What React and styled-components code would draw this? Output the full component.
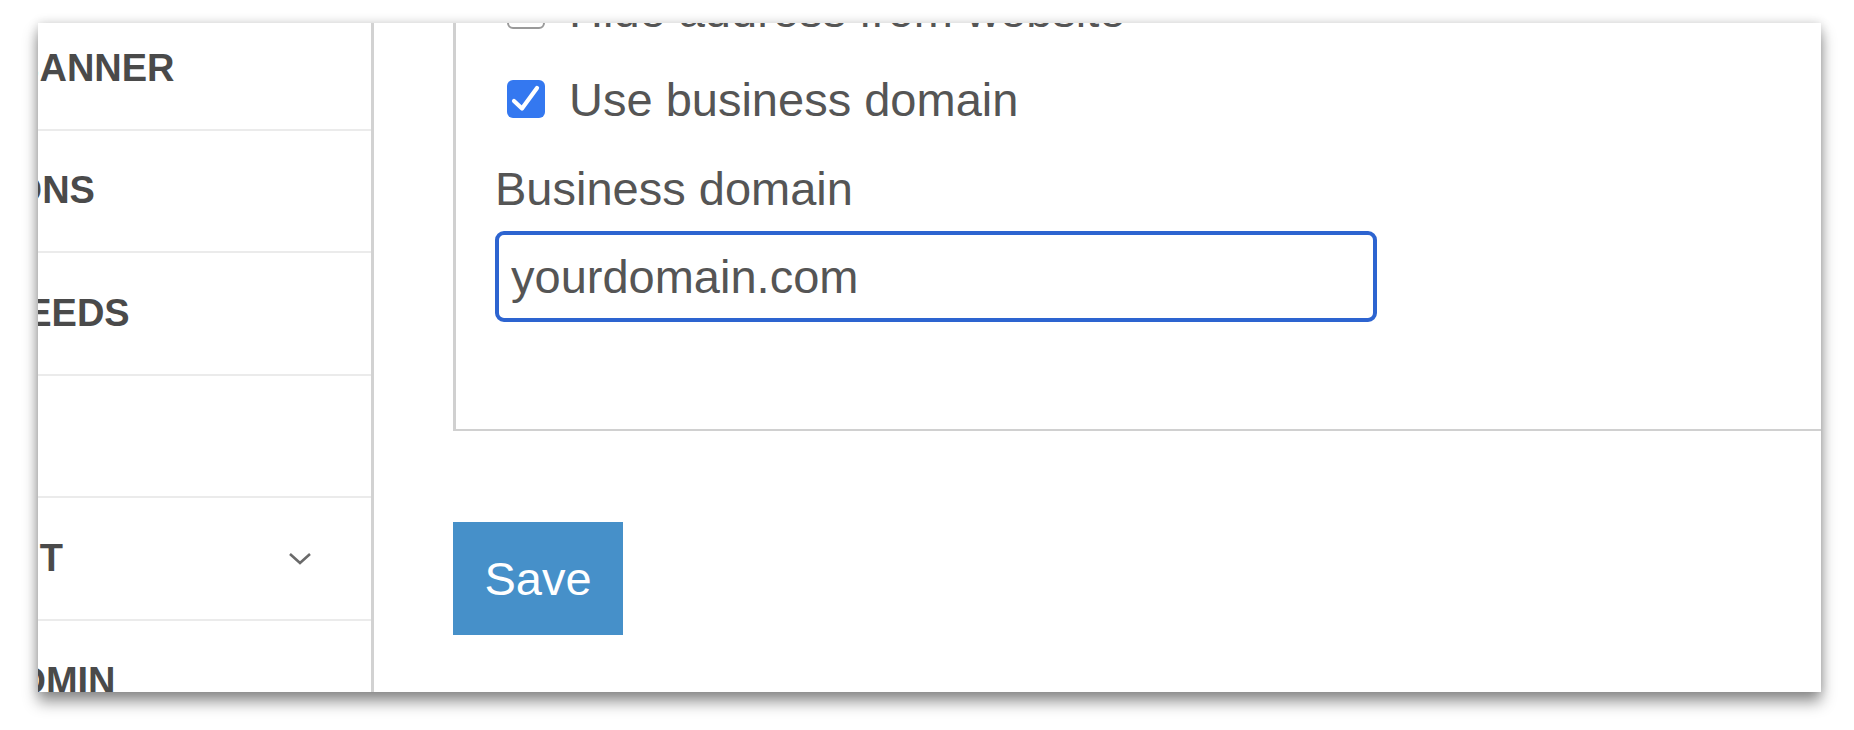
import styled, { createGlobalStyle } from "styled-components";

const GlobalStyle = createGlobalStyle`
  body {
    margin: 0;
    background: #ffffff;
    font-family: "Liberation Sans", Arial, Helvetica, sans-serif;
  }
`;

const Stage = styled.div`
  padding: 23px 33px 40px 38px;
`;

const Window = styled.div`
  display: flex;
  height: 669px;
  background: #ffffff;
  overflow: hidden;
  box-shadow: 0 10px 14px rgba(0, 0, 0, 0.42), 0 0 10px rgba(0, 0, 0, 0.16);
`;

const Sidebar = styled.nav`
  flex-shrink: 0;
  width: 336px;
  box-sizing: border-box;
  border-right: 3px solid #d2d2d2;
  overflow: hidden;
`;

const SideList = styled.div`
  margin-top: -15px;
`;

const SideItem = styled.div`
  display: flex;
  align-items: center;
  justify-content: space-between;
  height: 122.6px;
  box-sizing: border-box;
  padding-right: 59px;
  border-bottom: 2px solid #ebebeb;
  font-size: 38px;
  font-weight: bold;
  color: #4a4a4a;
  white-space: nowrap;
`;

const SideLabel = styled.span`
  margin-left: ${(p) => p.offset}px;
`;

const Chevron = () => (
  <svg width="24" height="13" viewBox="0 0 24 13" fill="none">
    <path d="M2 2 L12 11 L22 2" stroke="#6a6a6a" strokeWidth="2.6" />
  </svg>
);

const Main = styled.main`
  flex: 1;
  padding-left: 79px;
`;

const Panel = styled.section`
  margin-top: -80px;
  padding: 20.5px 0 107px 39px;
  border-top: 2px solid #d0d0d0;
  border-left: 3px solid #d0d0d0;
  border-bottom: 2px solid #d0d0d0;
`;

const CheckRow = styled.label`
  display: flex;
  align-items: center;
  gap: 24px;
  height: 89px;
  padding-left: 12px;
  font-size: 47px;
  color: #555555;
  white-space: nowrap;
`;

const Box = styled.span`
  display: flex;
  align-items: center;
  justify-content: center;
  width: 38px;
  height: 38px;
  box-sizing: border-box;
  border-radius: 6px;
  background: ${(p) => (p.checked ? "#3478f0" : "#ffffff")};
  border: ${(p) => (p.checked ? "none" : "2px solid #9a9a9a")};
`;

const Check = ({ checked }) => (
  <Box checked={checked}>
    {checked && (
      <svg width="38" height="38" viewBox="0 0 38 38" fill="none">
        <path
          d="M7 21 L15 28.5 L30 8"
          stroke="#ffffff"
          strokeWidth="4.2"
          strokeLinecap="round"
          strokeLinejoin="round"
        />
      </svg>
    )}
  </Box>
);

const FieldLabel = styled.div`
  margin-top: 18px;
  height: 54px;
  line-height: 54px;
  font-size: 47px;
  color: #555555;
`;

const TextInput = styled.input`
  display: block;
  margin-top: 15.5px;
  width: 882px;
  height: 91px;
  box-sizing: border-box;
  padding: 0 12px;
  border: 4px solid #2d64d0;
  border-radius: 9px;
  outline: none;
  font-family: inherit;
  font-size: 47px;
  color: #555555;
  background: #ffffff;
`;

const SaveButton = styled.button`
  margin-top: 91px;
  width: 170px;
  height: 113px;
  border: none;
  border-radius: 0;
  background: #4690c9;
  color: #ffffff;
  font-family: inherit;
  font-size: 47px;
  padding: 0;
`;

const navItems = [
  { label: "BANNER", offset: -26 },
  { label: "LOCATIONS", offset: -164 },
  { label: "FEEDS", offset: -35 },
  { label: "", offset: 0 },
  { label: "ACCOUNT", offset: -165, menu: true },
  { label: "ADMIN", offset: -47 },
];

export default function App() {
  return (
    <>
      <GlobalStyle />
      <Stage>
        <Window>
          <Sidebar>
            <SideList>
              {navItems.map((item, i) => (
                <SideItem key={i}>
                  <SideLabel offset={item.offset}>{item.label}</SideLabel>
                  {item.menu && <Chevron />}
                </SideItem>
              ))}
            </SideList>
          </Sidebar>
          <Main>
            <Panel>
              <CheckRow>
                <Check checked={false} />
                Hide address from website
              </CheckRow>
              <CheckRow>
                <Check checked />
                Use business domain
              </CheckRow>
              <FieldLabel>Business domain</FieldLabel>
              <TextInput defaultValue="yourdomain.com" />
            </Panel>
            <SaveButton>Save</SaveButton>
          </Main>
        </Window>
      </Stage>
    </>
  );
}
